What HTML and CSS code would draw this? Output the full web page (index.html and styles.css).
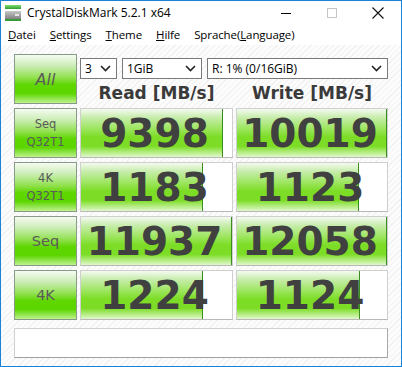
FILE: index.html
```html
<!DOCTYPE html>
<html lang="de">

<head>
  <meta charset="UTF-8" />
  <title>CrystalDiskMark 5.2.1 x64</title>
  <link rel="stylesheet" href="styles.css">
</head>

<body>
  <div class="window">
    <div class="titlebar">
      <svg class="appicon" width="18" height="18" viewBox="0 0 18 18">
        <defs>
          <linearGradient id="g1" x1="0" y1="0" x2="0" y2="1">
            <stop offset="0" stop-color="#7ede6a" />
            <stop offset="1" stop-color="#2f9e3a" />
          </linearGradient>
          <linearGradient id="g2" x1="0" y1="0" x2="0" y2="1">
            <stop offset="0" stop-color="#c8c8c8" />
            <stop offset="1" stop-color="#6e6e6e" />
          </linearGradient>
        </defs>
        <rect x="1" y="1" width="16" height="4" fill="url(#g1)" />
        <rect x="1" y="7" width="16" height="10" fill="url(#g2)" />
        <rect x="1" y="15" width="16" height="2" fill="#3a9a3a" />
        <rect x="11" y="10" width="4" height="2" fill="#e8e8e8" />
      </svg>
      <span class="title">CrystalDiskMark 5.2.1 x64</span>
      <div class="controls">
        <span class="ctl">
          <svg width="10" height="10" viewBox="0 0 10 10"><path d="M0 5.5h10" stroke="#000" stroke-width="1" /></svg>
        </span>
        <span class="ctl">
          <svg width="10" height="10" viewBox="0 0 10 10"><rect x="0.5" y="0.5" width="9" height="9" fill="none" stroke="#c4c4c4" /></svg>
        </span>
        <span class="ctl">
          <svg width="12" height="12" viewBox="0 0 12 12"><path d="M0.5 0.5l11 11M11.5 0.5l-11 11" stroke="#111" stroke-width="1.1" /></svg>
        </span>
      </div>
    </div>

    <div class="menubar">
      <span><u>D</u>atei</span>
      <span><u>S</u>ettings</span>
      <span><u>T</u>heme</span>
      <span><u>H</u>ilfe</span>
      <span>Sprache(<u>L</u>anguage)</span>
    </div>

    <div class="main">
      <div class="grid">
        <div class="btn big italic">All</div>
        <div class="top">
          <div class="selects">
            <div class="sel s-count">3 <svg width="11" height="7" viewBox="0 0 11 7"><path d="M1 1l4.5 4.5L10 1" fill="none" stroke="#222" stroke-width="1.6" /></svg></div>
            <div class="sel s-size">1GiB <svg width="11" height="7" viewBox="0 0 11 7"><path d="M1 1l4.5 4.5L10 1" fill="none" stroke="#222" stroke-width="1.6" /></svg></div>
            <div class="sel s-drive">R: 1% (0/16GiB) <svg width="11" height="7" viewBox="0 0 11 7"><path d="M1 1l4.5 4.5L10 1" fill="none" stroke="#222" stroke-width="1.6" /></svg></div>
          </div>
          <div class="heads">
            <div>Read [MB/s]</div>
            <div>Write [MB/s]</div>
          </div>
        </div>

        <div class="btn small">Seq<br>Q32T1</div>
        <div class="val"><div class="fill" style="width: 94%"></div><div class="num">9398</div></div>
        <div class="val"><div class="fill" style="width: 100%"></div><div class="num">10019</div></div>

        <div class="btn small">4K<br>Q32T1</div>
        <div class="val"><div class="fill" style="width: 81%"></div><div class="num">1183</div></div>
        <div class="val"><div class="fill" style="width: 81%"></div><div class="num">1123</div></div>

        <div class="btn big">Seq</div>
        <div class="val"><div class="fill" style="width: 100%"></div><div class="num">11937</div></div>
        <div class="val"><div class="fill" style="width: 100%"></div><div class="num">12058</div></div>

        <div class="btn big">4K</div>
        <div class="val"><div class="fill" style="width: 81%"></div><div class="num">1224</div></div>
        <div class="val"><div class="fill" style="width: 82%"></div><div class="num">1124</div></div>
      </div>

      <div class="comment"></div>
    </div>
  </div>
</body>

</html>
```

FILE: styles.css
```css
* {
  box-sizing: border-box;
}

body {
  margin: 0;
  font-family: 'Open Sans', 'Noto Sans', sans-serif;
  font-size: 12px;
  color: #000;
  background: #fff;
}

.window {
  width: 402px;
  height: 367px;
  border: 1px solid #1883d7;
  display: flex;
  flex-direction: column;
  overflow: hidden;
}

/* Titelleiste */
.titlebar {
  height: 23px;
  display: flex;
  align-items: center;
  background: #fff;
}

.appicon {
  margin: 0 5px 0 3px;
}

.title {
  font-size: 12px;
  margin-top: -1px;
}

.controls {
  margin-left: auto;
  display: flex;
  height: 100%;
}

.ctl {
  width: 46px;
  display: flex;
  align-items: center;
  justify-content: center;
}

.menubar {
  height: 21px;
  display: flex;
  align-items: center;
  padding-left: 7px;
  gap: 14px;
  font-size: 11.5px;
  letter-spacing: -0.1px;
  background: #fff;
}

/* Inhalt */
.main {
  flex: 1;
  padding: 9px 13px 0;
  background: repeating-linear-gradient(135deg, #fcfcfc 0 3px, #f1f1f1 3px 4px);
}

.grid {
  display: grid;
  grid-template-columns: 63px 153px 152px;
  grid-auto-rows: 50px;
  column-gap: 3px;
  row-gap: 4px;
}

.btn {
  border: 1px solid #889a88;
  background: linear-gradient(to bottom, #f6fbf2 0%, #cdeeb8 22%, #8ee04a 48%, #5fd600 62%, #5cd600 80%, #bff18f 100%);
  color: #5a5a5a;
  font-family: 'DejaVu Sans', Verdana, sans-serif;
  display: flex;
  align-items: center;
  justify-content: center;
  text-align: center;
}

.btn.small {
  font-size: 11.5px;
  line-height: 18px;
}

.btn.big {
  font-size: 14.5px;
}

.btn.italic {
  font-style: italic;
  font-size: 16px;
}

.top {
  grid-column: span 2;
  display: flex;
  flex-direction: column;
  padding-top: 4px;
}

.selects {
  display: flex;
  gap: 5px;
}

.sel {
  height: 21px;
  border: 1px solid #7a7a7a;
  background: #fff;
  display: flex;
  align-items: center;
  justify-content: space-between;
  padding: 0 5px 0 4px;
  font-size: 12px;
}

.s-count { width: 37px; }
.s-size { width: 80px; }
.s-drive { width: 181px; }

.heads {
  display: grid;
  grid-template-columns: 153px 152px;
  column-gap: 3px;
  margin-top: 2px;
}

.heads div {
  text-align: center;
  font-family: 'DejaVu Sans', Verdana, sans-serif;
  font-weight: bold;
  font-size: 17px;
  color: #3a3a3a;
  line-height: 24px;
}

.val {
  display: grid;
  border: 1px solid #cfcfcf;
  border-bottom-color: #b8b8b8;
  background: #fff;
}

.val > div {
  grid-area: 1 / 1;
}

.fill {
  justify-self: start;
  height: 100%;
  border-right: 1px solid #3b8e1e;
  background: linear-gradient(to bottom, #f4faf0 0%, #c6ecaa 18%, #9fe662 40%, #7ddd26 58%, #7ddd26 78%, #b4ec82 90%, #e0f8cc 100%);
}

.num {
  place-self: center;
  font-family: 'DejaVu Sans', Verdana, sans-serif;
  font-weight: bold;
  font-size: 39px;
  color: #404040;
  line-height: 1;
  margin-top: 1px;
  margin-left: -4px;
}

.comment {
  margin-top: 8px;
  height: 30px;
  border: 1px solid #cfcfcf;
  border-bottom-color: #a0a0a0;
  border-right-color: #a8a8a8;
  background: #fff;
}
```
